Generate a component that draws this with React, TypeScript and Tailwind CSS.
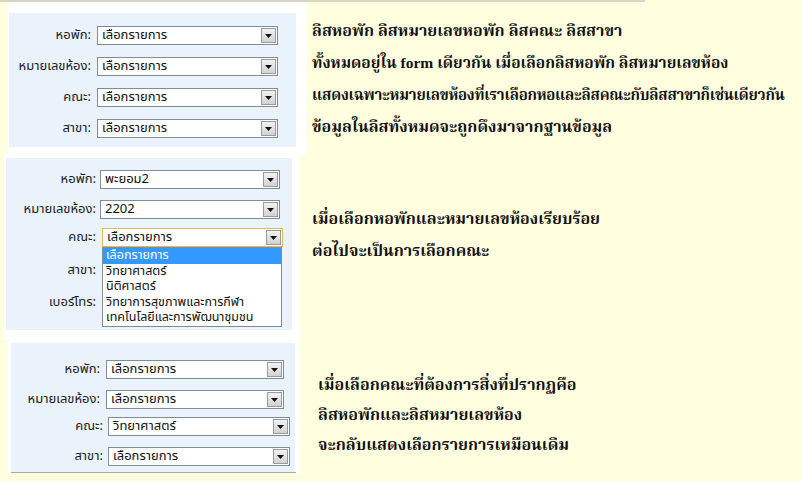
import React from "react";

const thaiSans = { fontFamily: '"Noto Sans Thai", Tahoma, "DejaVu Sans", sans-serif' };

function Select({ value, className = "", focused = false }: { value: string; className?: string; focused?: boolean }) {
  return (
    <div
      className={
        "relative h-[19px] bg-white border flex items-center " +
        (focused ? "border-[#e0b95a] " : "border-[#7f8c99] ") +
        className
      }
    >
      <span className="pl-[4px] text-[13px] leading-none text-[#111] whitespace-nowrap">{value}</span>
      <div className="absolute right-[1px] top-[1px] w-[15px] h-[15px] border border-[#9a9a9a] bg-gradient-to-b from-[#f2f2f2] to-[#d2d2d2] flex items-center justify-center">
        <svg width="7" height="4" viewBox="0 0 7 4">
          <path d="M0 0h7L3.5 4z" fill="#111" />
        </svg>
      </div>
    </div>
  );
}

function Row({ label, value, labelW, selectW, className = "", focused = false, noSelect = false }: {
  label: string; value: string; labelW: string; selectW: string; className?: string; focused?: boolean; noSelect?: boolean;
}) {
  return (
    <div className={"flex items-center h-[19px] " + className}>
      <div className={"text-right text-[13px] text-[#1a1a1a] whitespace-nowrap " + labelW}>{label}</div>
      {!noSelect && <Select value={value} focused={focused} className={selectW} />}
    </div>
  );
}

export default function App() {
  return (
    <div className="w-[802px] h-[481px] bg-[#ffffe0] overflow-hidden" style={thaiSans}>
      <div className="h-[2px] w-[645px] bg-[#d8d5c4]" />
      <div className="flex">
        {/* left: screenshots of the form */}
        <div className="w-[310px] flex flex-col">
          {/* image 1 */}
          <div className="ml-[8px] w-[299px] h-[153px] bg-white pt-[11px] pl-[1px]">
            <div className="w-[287px] h-[134px] bg-[#eaf3fc] pt-[13px] flex flex-col gap-[12px]">
              <Row label="หอพัก:" value="เลือกรายการ" labelW="w-[88px] pr-[6px]" selectW="w-[181px]" />
              <Row label="หมายเลขห้อง:" value="เลือกรายการ" labelW="w-[88px] pr-[6px]" selectW="w-[181px]" />
              <Row label="คณะ:" value="เลือกรายการ" labelW="w-[88px] pr-[6px]" selectW="w-[181px]" />
              <Row label="สาขา:" value="เลือกรายการ" labelW="w-[88px] pr-[6px]" selectW="w-[181px]" />
            </div>
          </div>

          {/* image 2 */}
          <div className="ml-[4px] w-[296px] h-[185px] bg-white pt-[3px] pl-[2px]">
            <div className="relative w-[286px] h-[172px] bg-[#eaf3fc] pt-[12px] flex flex-col">
              <Row label="หอพัก:" value="พะยอม2" labelW="w-[94px] pr-[4px]" selectW="w-[180px]" />
              <Row label="หมายเลขห้อง:" value="2202" labelW="w-[94px] pr-[4px]" selectW="w-[180px]" className="mt-[11px]" />
              <Row label="คณะ:" value="เลือกรายการ" labelW="w-[96px] pr-[6px]" selectW="w-[181px]" className="mt-[9px]" focused />
              <Row label="สาขา:" value="" labelW="w-[94px] pr-[4px]" selectW="" className="mt-[14px]" noSelect />
              <Row label="เบอร์โทร:" value="" labelW="w-[94px] pr-[4px]" selectW="" className="mt-[13px]" noSelect />
              {/* open dropdown */}
              <div className="absolute left-[96px] top-[89px] w-[180px] bg-white border border-[#7f8c99] text-[12.5px] text-[#111]">
                <div className="h-[15.5px] leading-[15px] bg-[#3399ff] text-white pl-[3px]">เลือกรายการ</div>
                <div className="h-[15.5px] leading-[15px] pl-[3px]">วิทยาศาสตร์</div>
                <div className="h-[15.5px] leading-[15px] pl-[3px]">นิติศาสตร์</div>
                <div className="h-[15.5px] leading-[15px] pl-[3px]">วิทยาการสุขภาพและการกีฬา</div>
                <div className="h-[15.5px] leading-[15px] pl-[3px]">เทคโนโลยีและการพัฒนาชุมชน</div>
              </div>
            </div>
          </div>

          {/* image 3 */}
          <div className="ml-[8px] w-[292px] h-[133px] bg-white pt-[3px] pl-[3px]">
            <div className="w-[284px] h-[129px] bg-[#eaf3fc] pt-[17px] flex flex-col">
              <Row label="หอพัก:" value="เลือกรายการ" labelW="w-[95px] pr-[6px]" selectW="w-[178px]" />
              <Row label="หมายเลขห้อง:" value="เลือกรายการ" labelW="w-[95px] pr-[6px]" selectW="w-[178px]" className="mt-[11px]" />
              <Row label="คณะ:" value="วิทยาศาสตร์" labelW="w-[97px] pr-[5px]" selectW="w-[182px]" className="mt-[8px]" />
              <Row label="สาขา:" value="เลือกรายการ" labelW="w-[97px] pr-[5px]" selectW="w-[182px]" className="mt-[11px]" />
            </div>
            <div className="w-[285px] h-[1px] bg-[#a9a9a9]" />
          </div>
        </div>

        {/* right: notes */}
        <div
          className="flex-1 flex flex-col text-[16px] font-bold text-[#111] whitespace-nowrap"
          style={{ fontFamily: '"Liberation Serif", "Noto Serif Thai", "Noto Sans Thai", serif' }}
        >
          <div className="mt-[13px] pl-[2px] leading-[32px]">
            <p>ลิสหอพัก ลิสหมายเลขหอพัก ลิสคณะ ลิสสาขา</p>
            <p className="text-[15.5px]">ทั้งหมดอยู่ใน form เดียวกัน เมื่อเลือกลิสหอพัก ลิสหมายเลขห้อง</p>
            <p className="text-[15px] tracking-[-0.25px]">แสดงเฉพาะหมายเลขห้องที่เราเลือกหอและลิสคณะกับลิสสาขาก็เช่นเดียวกัน</p>
            <p>ข้อมูลในลิสทั้งหมดจะถูกดึงมาจากฐานข้อมูล</p>
          </div>
          <div className="mt-[60px] pl-[2px] leading-[32px]">
            <p>เมื่อเลือกหอพักและหมายเลขห้องเรียบร้อย</p>
            <p>ต่อไปจะเป็นการเลือกคณะ</p>
          </div>
          <div className="mt-[103px] pl-[8px] leading-[30px]">
            <p>เมื่อเลือกคณะที่ต้องการสิ่งที่ปรากฏคือ</p>
            <p>ลิสหอพักและลิสหมายเลขห้อง</p>
            <p>จะกลับแสดงเลือกรายการเหมือนเดิม</p>
          </div>
        </div>
      </div>
    </div>
  );
}
